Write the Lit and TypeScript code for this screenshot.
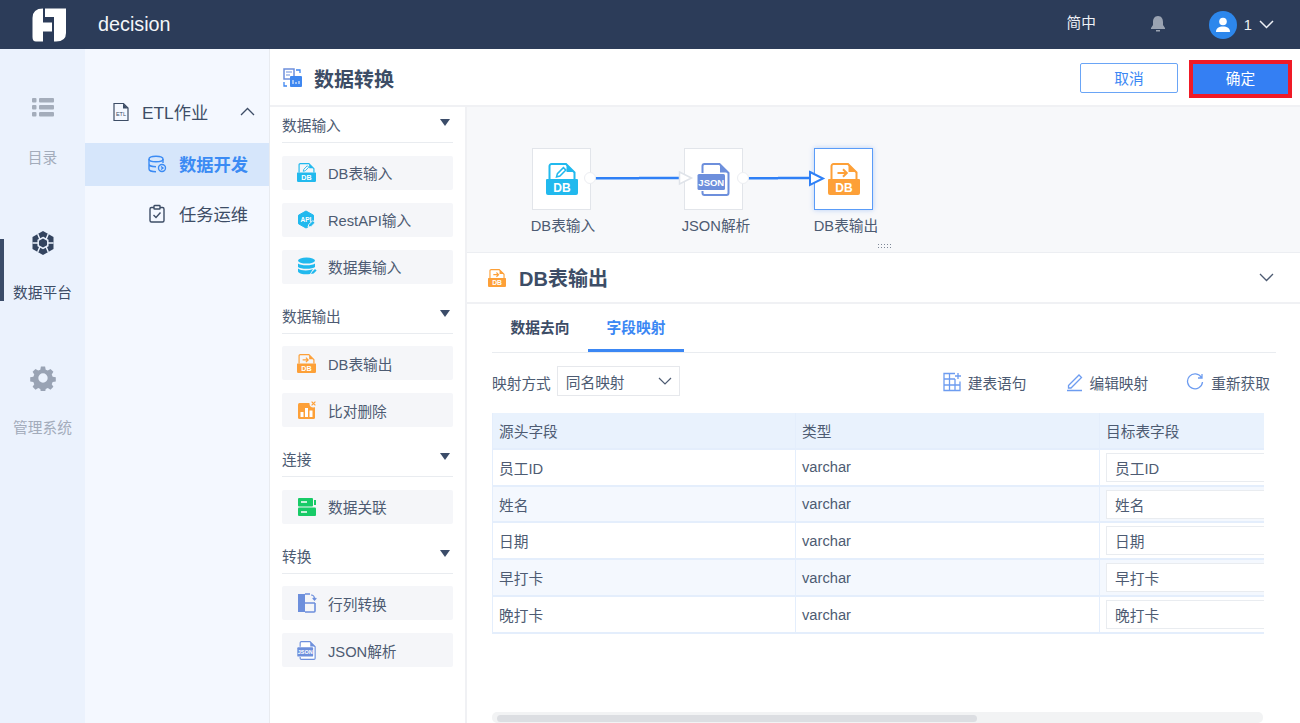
import { LitElement, html, css, svg } from "lit";
import { customElement } from "lit/decorators.js";

const CYAN = "#21b9ee";
const ORANGE = "#fda038";
const PERI = "#6d8fdc";

const dbFile = (c: string, glyph: unknown, size = 19) => html`
  <svg viewBox="0 0 32 32" width=${size} height=${size}>
    <path d="M3.500 16V3a2 2 0 0 1 2-2H20l8.500 8.500V16" fill="none" stroke=${c} stroke-width="2"/>
    <path d="M20.500 1.500l7.500 7.500h-7.500z" fill=${c}/>
    ${glyph}
    <path d="M1 16h30a1 1 0 0 1 1 1v13a2 2 0 0 1-2 2H2a2 2 0 0 1-2-2V17a1 1 0 0 1 1-1z" fill=${c}/>
    <text x="16" y="28.500" text-anchor="middle" font-size="12" font-weight="700" fill="#fff" font-family="Liberation Sans">DB</text>
  </svg>`;
const pen = (c: string) => svg`<path d="M10.500 14l.9-3.400 6-6 2.500 2.500-6 6z" fill="none" stroke=${c} stroke-width="1.500"/>`;
const arrow = (c: string) => svg`<path d="M9.500 10h9.500M15 6.200l3.800 3.800-3.800 3.800" fill="none" stroke=${c} stroke-width="2"/>`;

const jsonFile = (size: number, fs = 9.5) => html`
  <svg viewBox="0 0 32 33" width=${size} height=${size}>
    <path d="M5 10V3a2 2 0 0 1 2-2h15l9 9v20a2 2 0 0 1-2 2H7a2 2 0 0 1-2-2v-2" fill="#fff" stroke=${PERI} stroke-width="2"/>
    <path d="M22.500 1.500l8 8h-8z" fill=${PERI}/>
    <rect x="0" y="11" width="27.500" height="16" rx="1.500" fill=${PERI}/>
    <text x="13.800" y="22.500" text-anchor="middle" font-size=${fs} font-weight="700" fill="#fff" font-family="Liberation Sans">JSON</text>
  </svg>`;

const icons: Record<string, () => unknown> = {
  dbIn: () => dbFile(CYAN, pen(CYAN)),
  api: () => html`<svg viewBox="0 0 19 19" width="19" height="19">
    <path d="M9 1l7.500 4.200v8.600L9 18 1.500 13.800V5.200z" fill=${CYAN} stroke=${CYAN} stroke-linejoin="round"/>
    <text x="9" y="11.500" text-anchor="middle" font-size="6.500" font-weight="700" fill="#fff" font-family="Liberation Sans">API</text>
    <path d="M11 17l.8-2.500 4-4 2.200 2.200-4 4z" fill=${CYAN} stroke="#f5f6f9"/>
  </svg>`,
  set: () => html`<svg viewBox="0 0 20 20" width="20" height="20">
    <ellipse cx="9.500" cy="3.600" rx="8.500" ry="3" fill=${CYAN}/>
    <path d="M1 6.500c2 2.400 15 2.400 17 0v3.400c-2 2.400-15 2.400-17 0z" fill=${CYAN}/>
    <path d="M1 11.500c2 2.400 12 2.400 15 .6l-3 5c-5 .8-11-.2-12-2.600z" fill=${CYAN}/>
    <path d="M14 17l1-2 3-3 1.600 1.600-3 3z" fill=${CYAN}/>
  </svg>`,
  dbOut: () => dbFile(ORANGE, arrow(ORANGE)),
  cmp: () => html`<svg viewBox="0 0 20 20" width="20" height="20">
    <rect x="1" y="3" width="17" height="16" rx="1.500" fill=${ORANGE}/>
    <rect x="3.500" y="12" width="3" height="5" fill="#fff"/><rect x="8" y="8" width="3" height="9" fill="#fff"/><rect x="12.500" y="10.500" width="3" height="6.500" fill="#fff"/>
    <circle cx="16.500" cy="3.500" r="4" fill="#f5f6f9"/>
    <path d="M14.600 1.600l3.800 3.800M18.400 1.600l-3.800 3.800" stroke=${ORANGE} stroke-width="1.200"/>
  </svg>`,
  join: () => html`<svg viewBox="0 0 20 20" width="20" height="20">
    <rect x="1" y="1" width="15" height="8.500" rx="1" fill="#18cb67"/><rect x="1" y="10.500" width="18" height="8.500" rx="1" fill="#18cb67"/>
    <path d="M4 5h6M4 15h6" stroke="#fff" stroke-width="1.400"/>
    <path d="M17 3h2v5h-2z" fill="#18cb67"/>
  </svg>`,
  pivot: () => html`<svg viewBox="0 0 20 20" width="20" height="20">
    <rect x="1" y="1" width="7" height="18" fill=${PERI}/>
    <path d="M8 1h5M18 10v8a1 1 0 0 1-1 1H8M8 10h10" fill="none" stroke=${PERI} stroke-width="1.600"/>
    <path d="M14 2c2 0 3.500 1.500 3.500 4M15.700 5l1.800 2 1.800-2" fill="none" stroke=${PERI} stroke-width="1.200"/>
  </svg>`,
  json: () => jsonFile(19, 9.500),
};

const pal = [
  { t: "数据输入", items: [["dbIn", "DB表输入"], ["api", "RestAPI输入"], ["set", "数据集输入"]] },
  { t: "数据输出", items: [["dbOut", "DB表输出"], ["cmp", "比对删除"]] },
  { t: "连接", items: [["join", "数据关联"]] },
  { t: "转换", items: [["pivot", "行列转换"], ["json", "JSON解析"]] },
];
const rows = ["员工ID", "姓名", "日期", "早打卡", "晚打卡"];

@customElement("app-root")
export class AppRoot extends LitElement {
  static styles = css`
    :host { display: block; width: 1300px; height: 723px; overflow: hidden; background: #fff; color: #3d4d66;
      font-family: "Liberation Sans", "Noto Sans CJK SC", sans-serif; font-size: 14.7px; }
    * { box-sizing: border-box; }
    svg { display: block; flex: none; }
    .head { height: 49px; background: #2c3c59; color: #fff; display: flex; align-items: center; padding-left: 32px; }
    .brand { font-size: 19.800px; margin-left: 30px; color: #f4f6fa; }
    .lang { margin-left: auto; color: #eef1f6; position: relative; top: -3px; }
    .bell { margin-left: 54px; position: relative; top: -1px; }
    .avatar { margin-left: 43px; width: 28px; height: 28px; border-radius: 50%; background: #2d87ec; display: flex; align-items: center; justify-content: center; }
    .uid { margin-left: 7px; color: #eef1f6; }
    .chev { margin-left: 7px; margin-right: 26px; }
    .body { display: flex; height: 674px; }
    .rail { width: 85px; background: #ebf2fd; display: flex; flex-direction: column; }
    .rail-item { display: flex; flex-direction: column; align-items: center; color: #a3acbb; position: relative; }
    .rail-item span { margin-top: 26px; }
    .rail-item.first { padding-top: 47px; height: 182px; }
    .rail-item.plat { height: 134px; color: #3d4d66; }
    .rail-item.plat::before { content: ""; position: absolute; left: 0; top: 8px; width: 4px; height: 62px; background: #3b4c69; }
    .rail-item.last span { margin-top: 25px; }
    .nav { width: 185px; background: #f4f8ff; padding-top: 44px; border-right: 1px solid #e8ebf0; flex: none; }
    .nav-row { height: 37px; display: flex; align-items: center; font-size: 17.300px; padding-left: 26px; color: #3d4d66; }
    .nav-row svg:first-child { margin-right: 11px; }
    .nav-row .up { margin-left: auto; margin-right: 14px; }
    .nav-sub { height: 43px; display: flex; align-items: center; padding: 0 0 2px 62px; gap: 12px; font-size: 17.300px; }
    .nav-sub.on { background: #d6e6fb; color: #3b8bf4; font-weight: 700; margin-top: 13px; }
    .nav-sub + .nav-sub { margin-top: 7px; }
    .main { flex: 1; display: flex; flex-direction: column; min-width: 0; }
    .title { height: 58px; display: flex; align-items: center; padding: 2px 8px 0 13px; border-bottom: 2px solid #f0f1f4; flex: none; }
    .title h1 { font-size: 20px; margin: 0 0 0 11px; color: #3d4d66; font-weight: 700; }
    .btn { height: 30px; width: 98px; border: 1px solid #6aa5f6; border-radius: 2px; color: #3b87f4; display: flex; align-items: center; justify-content: center; margin-left: auto; padding-bottom: 2px; }
    .ok { margin-left: 11px; width: 103px; height: 38px; background: #347ff3; border: 4px solid #f01a26; color: #fff; border-radius: 0; position: relative; top: 1px; padding-bottom: 4px; }
    .work { flex: 1; display: flex; min-height: 0; }
    .pal { width: 197px; border-right: 2px solid #f0f1f4; padding: 0 12px; flex: none; }
    .ph { height: 36px; display: flex; align-items: center; justify-content: space-between; border-bottom: 1px solid #e9ecf0; padding: 0 3px 0 0; color: #4d5b72; }
    .sec + .sec { margin-top: 14px; }
    .tri { width: 0; height: 0; border-left: 5.500px solid transparent; border-right: 5.500px solid transparent; border-top: 7px solid #3b4c69; position: relative; top: -2px; }
    .items { display: flex; flex-direction: column; gap: 13px; padding-top: 12.500px; }
    .pi { height: 34px; background: #f5f6f9; border-radius: 2px; display: flex; align-items: center; padding-left: 15px; color: #4d5b72; }
    .ic { width: 19px; margin-right: 12px; flex: none; }
    .right { flex: 1; display: flex; flex-direction: column; min-width: 0; }
    .canvas { height: 146px; background: #f7f8fa; position: relative; border-bottom: 1px solid #eceef2; flex: none; }
    .node { position: absolute; top: 41px; width: 59px; height: 62px; background: #fff; border: 1px solid #e2e5ea; display: flex; align-items: center; justify-content: center; }
    .node.sel { border-color: #5a9cf8; box-shadow: 0 0 5px rgba(60,130,245,.35); }
    .nl { position: absolute; top: 107px; color: #4d5b72; width: 100px; text-align: center; white-space: nowrap; }
    .links { position: absolute; left: 0; top: 0; }
    .grip { position: absolute; left: 410px; top: 136px; width: 15px; height: 6px; background-image: radial-gradient(#7d8796 0.8px, transparent 0.9px); background-size: 3px 3px; }
    .ph2 { height: 51px; display: flex; align-items: center; padding: 0 26px 0 21px; border-bottom: 2px solid #f0f1f4; flex: none; }
    .ph2 h2 { font-size: 20px; font-weight: 700; margin: 0 0 0 13px; color: #3d4d66; }
    .ph2 .dn { margin-left: auto; }
    .pane { flex: 1; padding: 0 24px 0 25px; display: flex; flex-direction: column; min-height: 0; }
    .tabs { height: 49px; display: flex; border-bottom: 1px solid #e9ecf0; flex: none; }
    .tab { width: 96px; display: flex; align-items: center; justify-content: center; font-weight: 700; color: #3d4d66; border-bottom: 3px solid transparent; height: 48px; }
    .tab.on { color: #3b87f4; border-bottom-color: #3b87f4; }
    .tools { height: 60px; display: flex; align-items: center; color: #4d5b72; flex: none; padding-bottom: 2px; }
    .sel-box { width: 123px; height: 30px; border: 1px solid #e6e8ec; margin-left: 6px; display: flex; align-items: center; justify-content: space-between; padding: 0 7px 0 8px; position: relative; top: -1px; }
    .tool { display: flex; align-items: center; }
    .t1 { margin-left: auto; gap: 6px; }
    .t2 { margin-left: 40px; gap: 5px; }
    .t3 { margin-left: 38px; margin-right: 6px; gap: 7px; }
    .tw { width: 772px; height: 221px; overflow: hidden; flex: none; display: flex; flex-direction: column; }
    .row { display: grid; grid-template-columns: 303px 304px 304px; width: 911px; flex: 1; border-bottom: 2px solid #e4eefc; color: #4d5b72; }
    .row.hd { background: #e9f2fd; }
    .row.alt { background: #f4f8fe; }
    .c { display: flex; align-items: center; padding: 0 0 0 6px; border-left: 1px solid #e4eefc; }
    .inp { width: 200px; height: 29px; background: #fff; border: 1px solid #e9ecf0; display: flex; align-items: center; padding-left: 8px; }
    .spacer { flex: 1; }
    .sb { width: 771px; height: 11px; background: #f2f3f4; border-radius: 5px; padding: 3px 0 0 5px; flex: none; }
    .sb div { width: 480px; height: 7px; background: #dcdee2; border-radius: 4px; }
  `;

  render() {
    return html`
      <div class="head">
        <svg width="36" height="34" viewBox="0 0 36 34">
          <path d="M0.500 10Q0.500 .5 11 .5V14.500H20V23.500H11V33.500H4Q.5 33.500 .5 29z" fill="#fff"/>
          <path d="M13 .5H34V25Q34 33.500 24 33.500H22V9H13z" fill="#fff"/>
        </svg>
        <div class="brand">decision</div>
        <div class="lang">简中</div>
        <svg class="bell" width="16" height="18" viewBox="0 0 16 18"><path d="M8 1c-3.500 0-5 3-5 6v3l-2 3v1h14v-1l-2-3V7c0-3-1.500-6-5-6z" fill="#9aa3b2"/><path d="M6 15h4v1.500H6z" fill="#9aa3b2"/></svg>
        <div class="avatar"><svg width="16" height="16" viewBox="0 0 16 16"><circle cx="8" cy="4.500" r="3.800" fill="#fff"/><path d="M1 15c0-4 3-5.500 7-5.500s7 1.500 7 5.500z" fill="#fff"/></svg></div>
        <div class="uid">1</div>
        <svg class="chev" width="15" height="9" viewBox="0 0 15 9"><path d="M1 1l6.500 6.500L14 1" fill="none" stroke="#eef1f6" stroke-width="1.500"/></svg>
      </div>
      <div class="body">
        <div class="rail">
          <div class="rail-item first">
            <svg width="24" height="24" viewBox="0 0 24 24" fill="#a4adbb"><rect x="1" y="2" width="4.500" height="4.500" rx="1"/><rect x="8" y="2" width="15" height="4.500" rx="1"/><rect x="1" y="9" width="4.500" height="4.500" rx="1"/><rect x="8" y="9" width="15" height="4.500" rx="1"/><rect x="1" y="16" width="4.500" height="4.500" rx="1"/><rect x="8" y="16" width="15" height="4.500" rx="1"/></svg>
            <span>目录</span>
          </div>
          <div class="rail-item plat">
            <svg width="24" height="24" viewBox="0 0 24 24"><path d="M12 0L22.500 6V18L12 24 1.500 18V6z" fill="#33445f"/><path d="M6.750 3L9 8.500M17.250 3L15 8.500M22.500 12H17M17.250 21L15 15.500M6.750 21L9 15.500M1.500 12H7" stroke="#ebf2fd" stroke-width="1.500"/><path d="M12 6.500l4.800 2.750v5.500L12 17.500l-4.800-2.750v-5.500z" fill="#33445f" stroke="#ebf2fd" stroke-width="1.500"/></svg>
            <span>数据平台</span>
          </div>
          <div class="rail-item last">
            <svg width="26" height="26" viewBox="-.5 -.5 25 25" fill="#99a3b4"><path fill-rule="evenodd" d="M10 1h4l.6 3 2 .9 2.600-1.600 2.800 2.800-1.600 2.600.9 2 3 .6v4l-3 .6-.9 2 1.600 2.600-2.800 2.800-2.600-1.600-2 .9-.6 3h-4l-.6-3-2-.9-2.600 1.600-2.800-2.800 1.600-2.600-.9-2-3-.6v-4l3-.6.9-2L2 6.100l2.800-2.800 2.600 1.600 2-.9zm2 6.500a4.500 4.500 0 1 0 0 9 4.500 4.500 0 0 0 0-9z"/></svg>
            <span>管理系统</span>
          </div>
        </div>
        <div class="nav">
          <div class="nav-row">
            <svg width="20" height="20" viewBox="0 0 20 20"><path d="M3 18.500v-17h9.500l4.500 4.500v12.500z" fill="none" stroke="#3d4d66" stroke-width="1.200"/><path d="M12 1.500v5h5" fill="#3d4d66"/><text x="10" y="14" font-size="5.500" text-anchor="middle" fill="#3d4d66" font-family="Liberation Sans">ETL</text></svg>
            ETL作业
            <svg class="up" width="15" height="9" viewBox="0 0 15 9"><path d="M1 8l6.500-6.500L14 8" fill="none" stroke="#3d4d66" stroke-width="1.300"/></svg>
          </div>
          <div class="nav-sub on">
            <svg width="20" height="20" viewBox="0 0 20 20" fill="none" stroke="#3b8bf4" stroke-width="1.400"><ellipse cx="9" cy="5" rx="7" ry="2.800"/><path d="M2 5v10c0 1.500 3 2.800 7 2.800M16 5v4M2 10c0 1.500 3 2.800 7 2.800"/><circle cx="15" cy="14" r="3.500"/><path d="M14 12.500l2 1.500-2 1.500"/></svg>
            数据开发
          </div>
          <div class="nav-sub">
            <svg width="20" height="20" viewBox="0 0 20 20" fill="none" stroke="#3d4d66" stroke-width="1.400"><rect x="3" y="3.500" width="14" height="14.500" rx="1.500"/><rect x="7" y="1.500" width="6" height="3.500" rx=".6" fill="#f4f8ff"/><path d="M6.500 11l2.500 2.500 4.500-5"/></svg>
            任务运维
          </div>
        </div>
        <div class="main">
          <div class="title">
            <svg width="20" height="20" viewBox="0 0 20 20"><rect x="1" y="1" width="10" height="10" fill="none" stroke="#6d8fdc" stroke-width="1.500"/><path d="M3 4h6M3 7h4" stroke="#6d8fdc"/><rect x="7" y="8" width="12" height="11" rx="1" fill="#3f87f0"/><path d="M10 16v-4M13 16v-2M16 16v-3" stroke="#fff"/><path d="M13 2h4v3M1 14v4h3" fill="none" stroke="#3f87f0" stroke-width="1.300"/></svg>
            <h1>数据转换</h1>
            <div class="btn">取消</div>
            <div class="btn ok">确定</div>
          </div>
          <div class="work">
            <div class="pal">
              ${pal.map(s => html`<div class="sec">
                <div class="ph"><span>${s.t}</span><i class="tri"></i></div>
                <div class="items">${s.items.map(([i, t]) => html`<div class="pi"><div class="ic">${icons[i]()}</div><span>${t}</span></div>`)}</div>
              </div>`)}
            </div>
            <div class="right">
              <div class="canvas">
                <svg class="links" width="833" height="146">
                  <path d="M128 71.300h44" stroke="#2f80f6" stroke-width="2.500"/><path d="M172 71h40" stroke="#2f80f6" stroke-width="2.500"/>
                  <path d="M281 71.300h30M311 71h32" stroke="#2f80f6" stroke-width="2.500"/>
                </svg>
                <div class="node" style="left:65px">${dbFile(CYAN, pen(CYAN), 32)}</div>
                <div class="node" style="left:217px">${jsonFile(33)}</div>
                <div class="node sel" style="left:347px">${dbFile(ORANGE, arrow(ORANGE), 32)}</div>
                <svg class="links" width="833" height="146">
                  <circle cx="123" cy="71" r="5.500" fill="#fff" stroke="#eceef2"/>
                  <path d="M212.500 65l12 6-12 6z" fill="#fff" stroke="#dfe3e9" stroke-width="1.500"/>
                  <circle cx="276" cy="71" r="5.500" fill="#fff" stroke="#eceef2"/>
                  <path d="M343 65l13 6.500-13 6.500z" fill="#fff" stroke="#2f80f6" stroke-width="2"/>
                </svg>
                <div class="nl" style="left:46px">DB表输入</div>
                <div class="nl" style="left:199px">JSON解析</div>
                <div class="nl" style="left:329px">DB表输出</div>
                <div class="grip"></div>
              </div>
              <div class="ph2">
                ${dbFile(ORANGE, arrow(ORANGE), 18)}
                <h2>DB表输出</h2>
                <svg class="dn" width="15" height="9" viewBox="0 0 15 9"><path d="M1 1l6.500 6.500L14 1" fill="none" stroke="#4d5b72" stroke-width="1.300"/></svg>
              </div>
              <div class="pane">
                <div class="tabs"><div class="tab">数据去向</div><div class="tab on">字段映射</div></div>
                <div class="tools">
                  映射方式
                  <div class="sel-box">同名映射 <svg width="14" height="8" viewBox="0 0 14 8"><path d="M1 1l6 6 6-6" fill="none" stroke="#4d5b72" stroke-width="1.200"/></svg></div>
                  <div class="tool t1"><svg width="20" height="20" viewBox="0 0 20 20" fill="none" stroke="#6d9cf0" stroke-width="1.300"><path d="M13 1.500H2v17h16v-9M2 7h11M2 13h16M7.500 1.500v17M13 7v11.500M16 1v6M13 4h6"/></svg>建表语句</div>
                  <div class="tool t2"><svg width="18" height="20" viewBox="0 0 18 20" fill="none" stroke="#6d9cf0" stroke-width="1.300"><path d="M2.500 13.500L13 3l2.500 2.500L5 16H2.500zM1 18.500h15"/></svg>编辑映射</div>
                  <div class="tool t3"><svg width="18" height="18" viewBox="0 0 18 18" fill="none" stroke="#6d9cf0" stroke-width="1.300"><path d="M15.500 4.500A7.500 7.500 0 1 0 16.500 9M16 1v4h-4"/></svg>重新获取</div>
                </div>
                <div class="tw">
                  <div class="row hd"><div class="c">源头字段</div><div class="c">类型</div><div class="c">目标表字段</div></div>
                  ${rows.map((r, i) => html`<div class="row ${i % 2 ? "alt" : ""}"><div class="c">${r}</div><div class="c">varchar</div><div class="c"><div class="inp">${r}</div></div></div>`)}
                </div>
                <div class="spacer"></div>
                <div class="sb"><div></div></div>
              </div>
            </div>
          </div>
        </div>
      </div>
    `;
  }
}
